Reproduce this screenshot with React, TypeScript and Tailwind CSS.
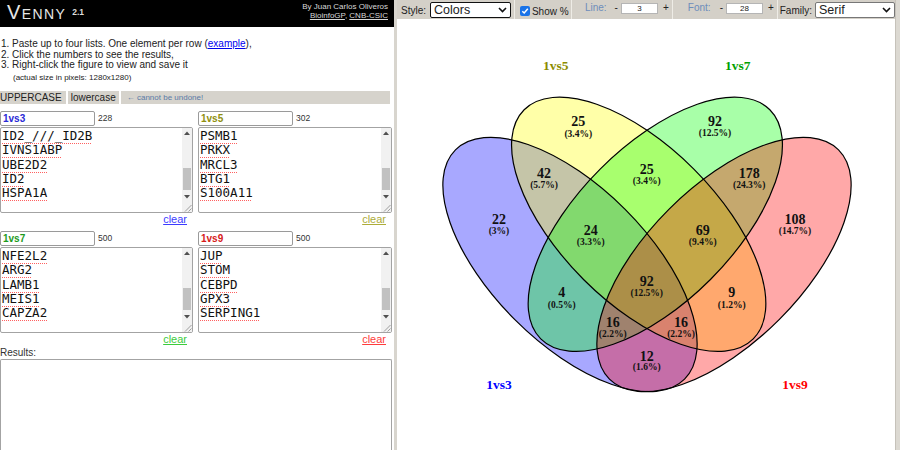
import React from "react";

type ListProps = {
  label: string;
  labelCls: string;
  count: string;
  items: string[];
  clearCls: string;
  w: string;
};

const ScrollTextarea = ({ items }: { items: string[] }) => (
  <div className="flex h-[86px] border border-[#a3a3a3] rounded-[2px] bg-white overflow-hidden">
    <div className="flex-1 overflow-hidden pl-[1px]">
      <div className="mt-[1px] font-['DejaVu_Sans_Mono',monospace] text-[12.5px] leading-[14.3px] text-[#111]">
        {items.map((it) => (
          <div key={it}>
            <span className="underline decoration-dotted decoration-[#ff6060] decoration-1 underline-offset-[3px]">{it}</span>
          </div>
        ))}
      </div>
    </div>
    <div className="w-[10px] flex flex-col bg-[#f1f1f1]">
      <div className="h-[10px] flex items-center justify-center">
        <svg width="6" height="4" viewBox="0 0 6 4"><path d="M0 4 L3 0.5 L6 4 Z" fill="#505050" /></svg>
      </div>
      <div className="flex-1 flex flex-col px-[1px]">
        <div className="h-[30px]" />
        <div className="h-[22px] bg-[#c1c1c1]" />
      </div>
      <div className="h-[10px] flex items-center justify-center">
        <svg width="6" height="4" viewBox="0 0 6 4"><path d="M0 0 L3 3.5 L6 0 Z" fill="#505050" /></svg>
      </div>
      <div className="h-[10px] bg-[#f1f1f1] flex items-end justify-end">
        <svg width="9" height="9" viewBox="0 0 9 9">
          <path d="M8.5 2 L2 8.5 M8.5 5.5 L5.5 8.5" stroke="#8a8a8a" strokeWidth="0.8" />
        </svg>
      </div>
    </div>
  </div>
);

const ListBox = ({ label, labelCls, count, items, clearCls, w }: ListProps) => (
  <div className={"flex flex-col " + w}>
    <div className="flex items-center h-[15px]">
      <div className={"w-[95px] h-[15px] border border-[#9a9a9a] rounded-[2px] bg-white pl-[2px] text-[10px] font-bold leading-[13px] " + labelCls}>
        {label}
      </div>
      <span className="ml-[3px] text-[8.5px] text-[#333]">{count}</span>
    </div>
    <div className="mt-[1px]">
      <ScrollTextarea items={items} />
    </div>
    <div className="h-[12px] flex justify-end pr-[6px]">
      <span className={"text-[11px] leading-[12px] underline " + clearCls}>clear</span>
    </div>
  </div>
);

const regions: [string, string, number, number, number][] = [
  ["25", "(3.4%)", 578.3, 121.7, 133.3],
  ["92", "(12.5%)", 715, 121.7, 132.7],
  ["42", "(5.7%)", 544, 173.3, 184.3],
  ["25", "(3.4%)", 646.7, 169.3, 180.7],
  ["178", "(24.3%)", 749.3, 173.3, 184.3],
  ["22", "(3%)", 499, 219, 230],
  ["24", "(3.3%)", 590.7, 230.7, 241.5],
  ["69", "(9.4%)", 702.7, 230.7, 241.5],
  ["108", "(14.7%)", 795, 219, 230],
  ["92", "(12.5%)", 646.7, 281.7, 292.7],
  ["4", "(0.5%)", 561.7, 292.7, 304],
  ["9", "(1.2%)", 731.7, 292.7, 304],
  ["16", "(2.2%)", 612.7, 322.7, 333.3],
  ["16", "(2.2%)", 681, 322.7, 333.3],
  ["12", "(1.6%)", 646.7, 356, 366.7],
];

const ellipses = [
  { cx: 570, cy: 264.5, rot: 45, fill: "#0000ff" },
  { cx: 638.7, cy: 224.3, rot: 45, fill: "#ffff00" },
  { cx: 655.3, cy: 224.3, rot: -45, fill: "#00ff00" },
  { cx: 724, cy: 264.5, rot: -45, fill: "#ff0000" },
];

const Venn = () => (
  <svg width="498" height="431" viewBox="397 19 498 431" className="block">
    {ellipses.map((e, i) => (
      <ellipse
        key={"f" + i}
        cx={e.cx}
        cy={e.cy}
        rx={162}
        ry={78}
        transform={`rotate(${e.rot} ${e.cx} ${e.cy})`}
        fill={e.fill}
        fillOpacity={0.34}
      />
    ))}
    {ellipses.map((e, i) => (
      <ellipse
        key={"s" + i}
        cx={e.cx}
        cy={e.cy}
        rx={162}
        ry={78}
        transform={`rotate(${e.rot} ${e.cx} ${e.cy})`}
        fill="none"
        stroke="#000"
        strokeWidth={1.2}
      />
    ))}
    <g fontFamily="'Liberation Serif', 'Times New Roman', serif" fontWeight="bold" textAnchor="middle" fill="#111">
      {regions.map(([n, p, x, ny, py], i) => (
        <g key={i}>
          <text x={x} y={ny + 4.5} fontSize="14">{n}</text>
          <text x={x} y={py + 3.5} fontSize="9.5">{p}</text>
        </g>
      ))}
      <text x={555.7} y={69.5} fontSize="13.5" fill="#8c8c00">1vs5</text>
      <text x={737.7} y={69.5} fontSize="13.5" fill="#00a000">1vs7</text>
      <text x={499} y={388.5} fontSize="13.5" fill="#0000ff">1vs3</text>
      <text x={795} y={388.5} fontSize="13.5" fill="#ff0000">1vs9</text>
    </g>
  </svg>
);

const Chevron = () => (
  <svg width="9" height="6" viewBox="0 0 9 6">
    <path d="M1 1 L4.5 4.5 L8 1" stroke="#111" strokeWidth="1.6" fill="none" />
  </svg>
);

const Toolbar = () => (
  <div className="h-[19px] flex bg-[#d4d0c8] text-[10px] text-[#222] font-['Liberation_Sans',Arial,sans-serif]">
    <div className="w-[117px] flex items-center pl-[4px]">
      <span className="mt-[2px]">Style:</span>
      <div className="ml-[4px] w-[81px] h-[16px] mt-[1px] border border-[#111] rounded-[2px] bg-white flex items-center justify-between pl-[3px] pr-[3px] text-[12.5px] leading-[14px]">
        <span>Colors</span>
        <Chevron />
      </div>
    </div>
    <div className="w-[1px] bg-[#eeece6]" />
    <div className="w-[56px] flex items-center pl-[5px]">
      <div className="w-[10px] h-[10px] mt-[2px] rounded-[2px] bg-[#1a73e8] flex items-center justify-center">
        <svg width="8" height="8" viewBox="0 0 8 8">
          <path d="M1.3 4.2 L3.2 6 L6.8 1.8" stroke="#fff" strokeWidth="1.5" fill="none" />
        </svg>
      </div>
      <span className="ml-[2px] mt-[3px]">Show %</span>
    </div>
    <div className="w-[1px] bg-[#eeece6]" />
    <div className="w-[100px] flex items-start pl-[13px] pt-[2px]">
      <span className="text-[#6d8dbb] leading-[11px]">Line:</span>
      <span className="ml-[8px] leading-[11px]">-</span>
      <div className="ml-[3px] w-[37px] h-[11px] mt-[1px] border border-[#b5b5b5] bg-white text-[8px] leading-[9px] text-center">3</div>
      <span className="ml-[5px] leading-[11px]">+</span>
    </div>
    <div className="w-[1px] bg-[#eeece6]" />
    <div className="w-[104px] flex items-start pl-[15px] pt-[2px]">
      <span className="text-[#6d8dbb] leading-[11px]">Font:</span>
      <span className="ml-[9px] leading-[11px]">-</span>
      <div className="ml-[3px] w-[37px] h-[11px] mt-[1px] border border-[#b5b5b5] bg-white text-[8px] leading-[9px] text-center">28</div>
      <span className="ml-[5px] leading-[11px]">+</span>
    </div>
    <div className="w-[1px] bg-[#eeece6]" />
    <div className="flex-1 flex items-center pl-[2px]">
      <span className="mt-[2px]">Family:</span>
      <div className="ml-[3px] w-[80px] h-[16px] mt-[1px] border border-[#777] rounded-[2px] bg-white flex items-center justify-between pl-[3px] pr-[3px] text-[12.5px] leading-[14px]">
        <span>Serif</span>
        <Chevron />
      </div>
    </div>
  </div>
);

export default function App() {
  return (
    <div className="w-[900px] h-[450px] flex bg-[#d4d0c8] overflow-hidden font-['Liberation_Sans',Arial,sans-serif]">
      <div className="w-[394px] h-[450px] bg-white flex flex-col">
        <div className="h-[27px] bg-black flex justify-between items-start">
          <div className="flex items-start pl-[7px]">
            <span className="text-[20px] leading-[22px] mt-[1px] tracking-[1.4px] text-[#e6e6e6] [font-variant:small-caps]">Venny</span>
            <span className="ml-[6px] mt-[8px] text-[8.5px] leading-[9px] font-bold text-[#dddddd]">2.1</span>
          </div>
          <div className="pr-[6px] pt-[2px] text-right text-[8px] leading-[9px] text-[#d8d8d8]">
            <div>By Juan Carlos Oliveros</div>
            <div>
              <span className="underline">BioinfoGP</span>, <span className="underline">CNB-CSIC</span>
            </div>
          </div>
        </div>
        <div className="pt-[12px] pl-[1px] text-[10px] leading-[10.67px] text-[#222]">
          <div>
            1. Paste up to four lists. One element per row (<span className="text-[#0000ee] underline">example</span>),
          </div>
          <div>2. Click the numbers to see the results,</div>
          <div>3. Right-click the figure to view and save it</div>
          <div className="pl-[12px] pt-[2px] text-[8px] leading-[10px]">(actual size in pixels: 1280x1280)</div>
        </div>
        <div className="mt-[8px] mr-[4px] h-[13px] flex bg-[#d6d3cc] text-[10px] leading-[13px] text-[#222]">
          <span className="pr-[4px]">UPPERCASE</span>
          <div className="w-[2px] bg-white" />
          <span className="px-[3px]">lowercase</span>
          <div className="w-[2px] bg-white" />
          <span className="pl-[6px] text-[8px] text-[#5b7aa6]">← cannot be undone!</span>
        </div>
        <div className="mt-[7px] flex gap-[5px]">
          <ListBox
            w="w-[193px]"
            label="1vs3"
            labelCls="text-[#2a2ad6]"
            count="228"
            items={["ID2_///_ID2B", "IVNS1ABP", "UBE2D2", "ID2", "HSPA1A"]}
            clearCls="text-[#3c3cff]"
          />
          <ListBox
            w="w-[194px]"
            label="1vs5"
            labelCls="text-[#8f8f10]"
            count="302"
            items={["PSMB1", "PRKX", "MRCL3", "BTG1", "S100A11"]}
            clearCls="text-[#adad3a]"
          />
        </div>
        <div className="mt-[6px] flex gap-[5px]">
          <ListBox
            w="w-[193px]"
            label="1vs7"
            labelCls="text-[#1d9a1d]"
            count="500"
            items={["NFE2L2", "ARG2", "LAMB1", "MEIS1", "CAPZA2"]}
            clearCls="text-[#3ccc3c]"
          />
          <ListBox
            w="w-[194px]"
            label="1vs9"
            labelCls="text-[#d61a1a]"
            count="500"
            items={["JUP", "STOM", "CEBPD", "GPX3", "SERPING1"]}
            clearCls="text-[#ff3c3c]"
          />
        </div>
        <div className="h-[14px] pt-[2px] text-[10px] leading-[12px] text-[#333]">Results:</div>
        <div className="w-[392px] flex-1 border border-[#a3a3a3] border-b-0 rounded-t-[2px] bg-white" />
      </div>
      <div className="w-[3px] bg-[#d8d5ce]" />
      <div className="w-[498px] flex flex-col">
        <Toolbar />
        <div className="flex-1 bg-white">
          <Venn />
        </div>
      </div>
      <div className="flex-1 bg-[#dcd9d2] border-l border-[#c6c2ba]" />
    </div>
  );
}
